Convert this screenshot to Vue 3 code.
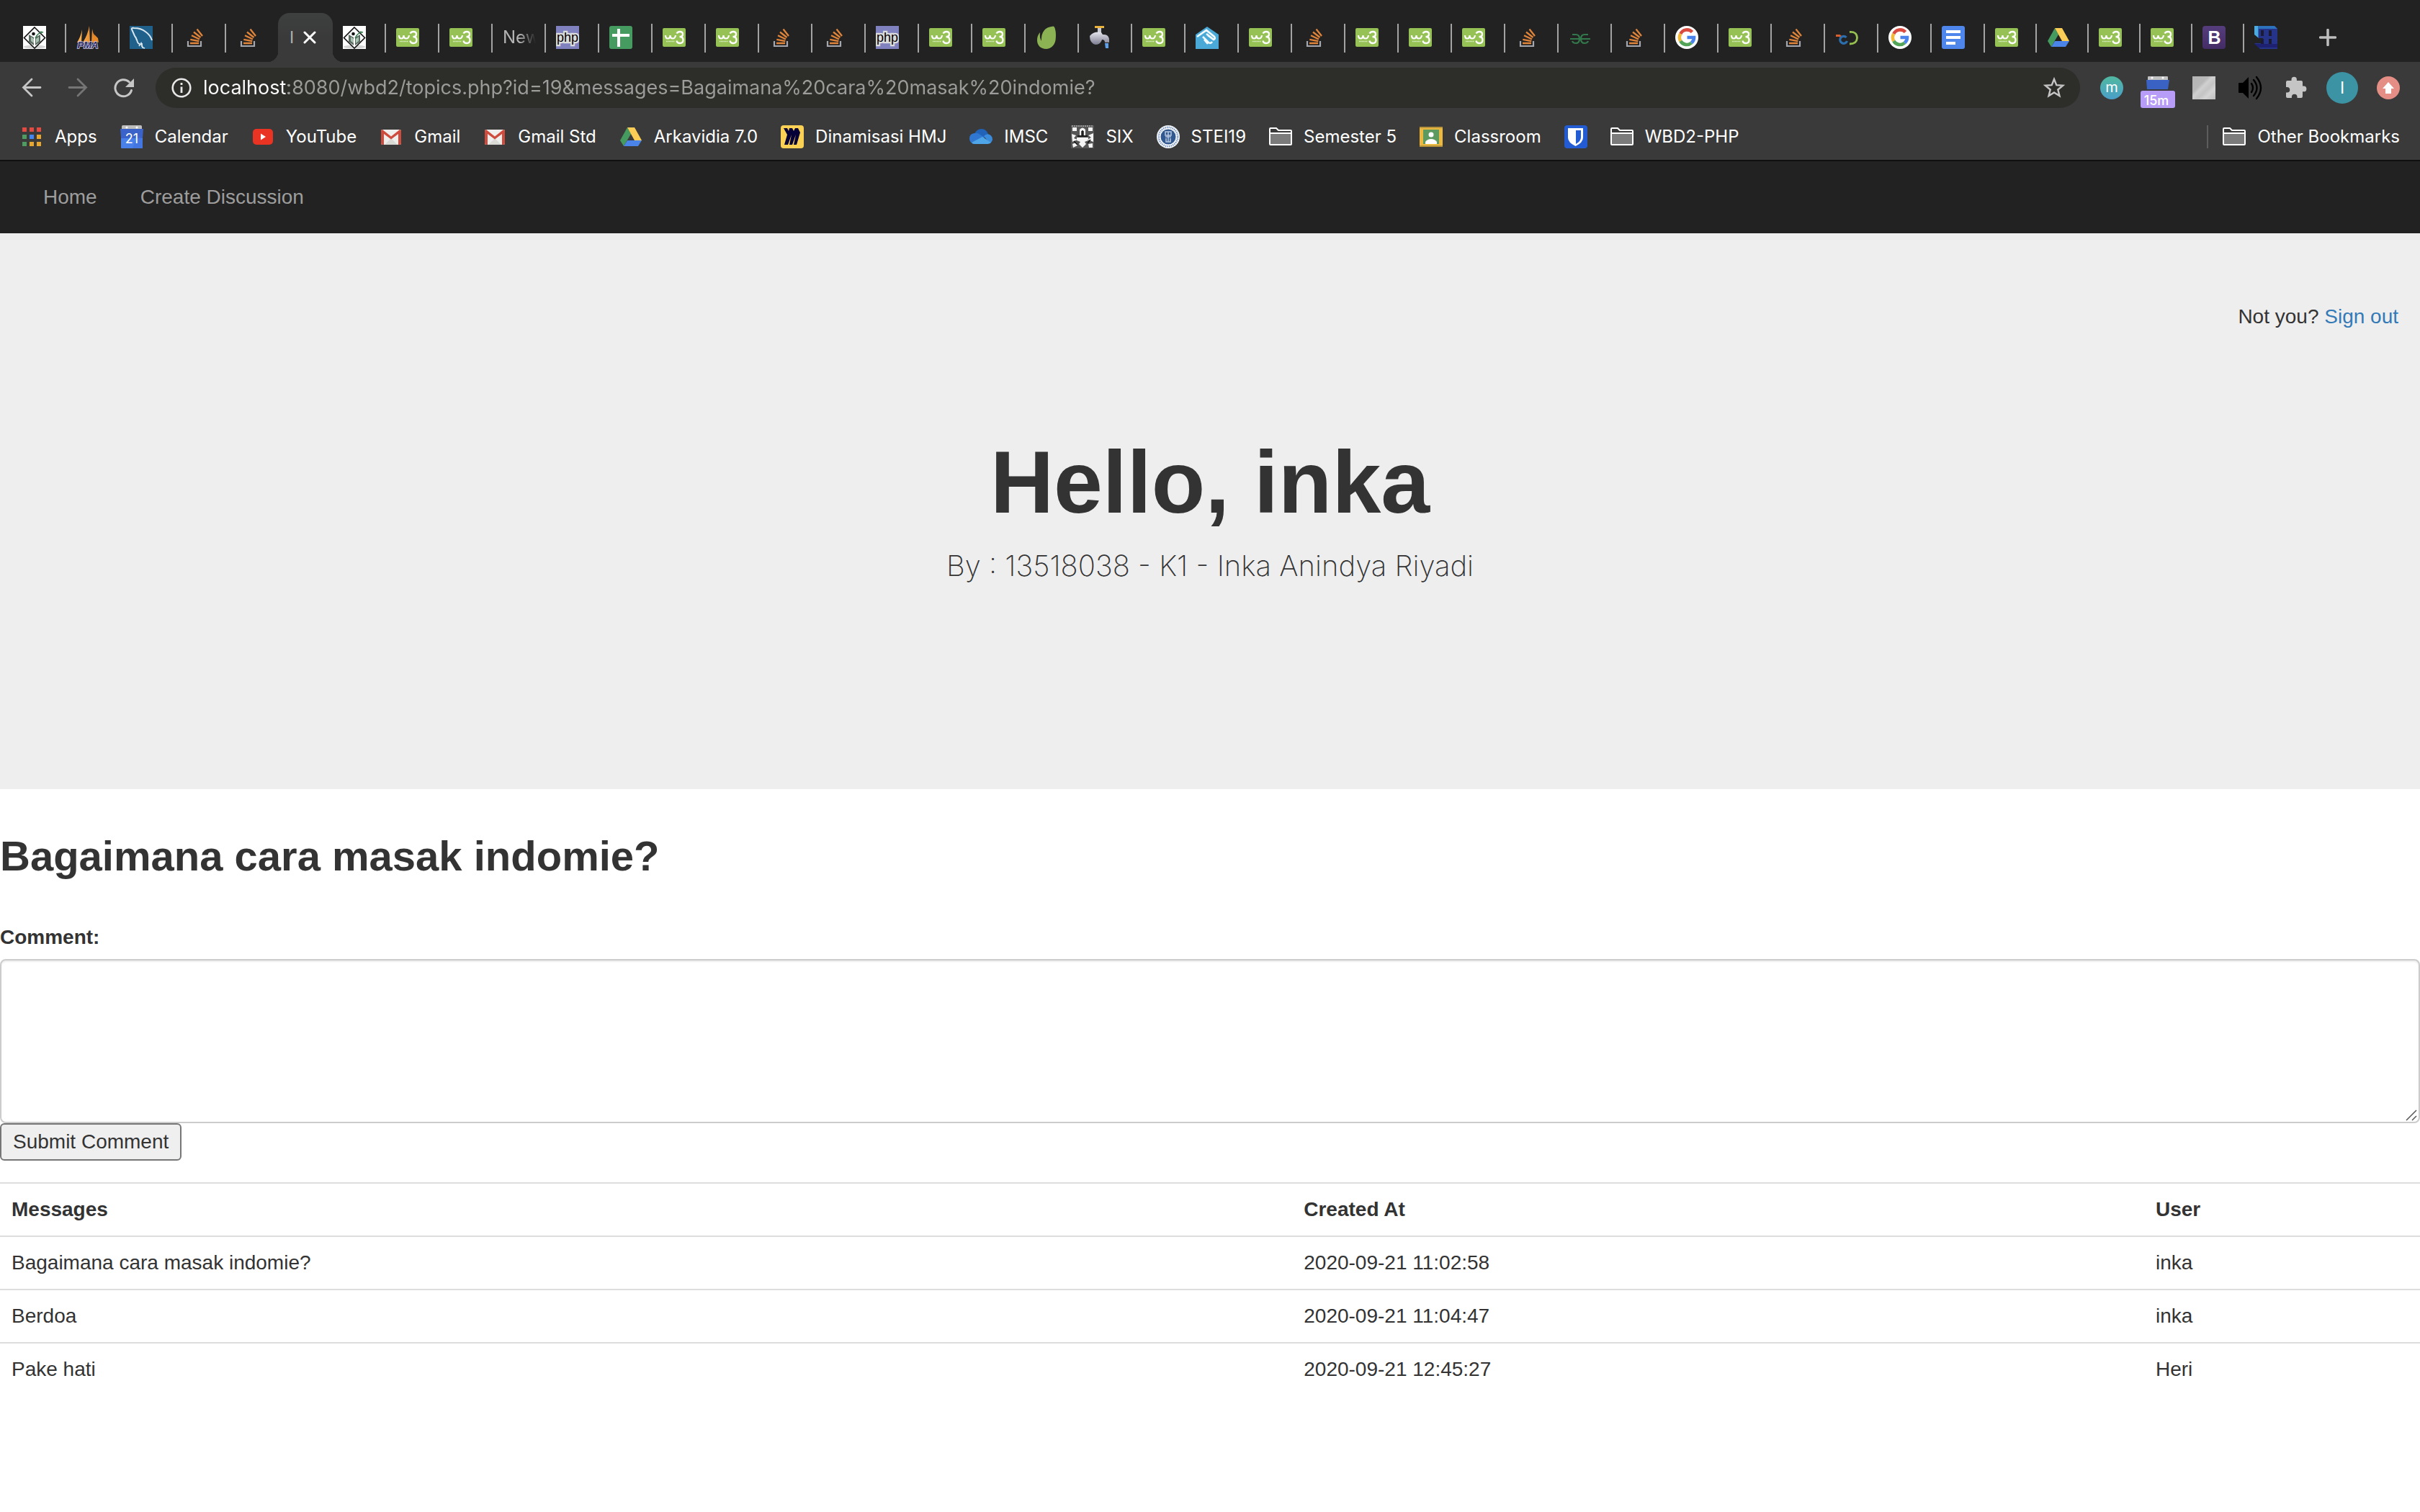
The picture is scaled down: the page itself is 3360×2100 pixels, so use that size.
<script setup>
import { ref } from 'vue'

const favicons = [
  'diamond', 'pma', 'mysql', 'stack', 'stack', 'active', 'diamond', 'w3', 'w3', 'new', 'php', 'sheets',
  'w3', 'w3', 'stack', 'stack', 'php', 'w3', 'w3', 'leaf', 'tap', 'w3', 'house', 'w3', 'stack', 'w3', 'w3',
  'w3', 'stack', 'gfg', 'stack', 'google', 'w3', 'stack', 'rings', 'google', 'docs',
  'w3', 'drive', 'w3', 'w3', 'bootstrap', 'cube',
]
const activeIndex = favicons.indexOf('active')
const tabs = favicons.map((icon, i) => ({
  icon,
  narrow: i > 36,
  divider: i !== activeIndex && i !== activeIndex - 1 && i !== favicons.length - 1,
}))

const bookmarks = [
  { icon: 'apps', label: 'Apps' },
  { icon: 'calendar', label: 'Calendar' },
  { icon: 'youtube', label: 'YouTube' },
  { icon: 'gmail', label: 'Gmail' },
  { icon: 'gmail', label: 'Gmail Std' },
  { icon: 'drive', label: 'Arkavidia 7.0' },
  { icon: 'miro', label: 'Dinamisasi HMJ' },
  { icon: 'cloud', label: 'IMSC' },
  { icon: 'six', label: 'SIX' },
  { icon: 'seal', label: 'STEI19' },
  { icon: 'folder', label: 'Semester 5' },
  { icon: 'classroom', label: 'Classroom' },
  { icon: 'shield', label: '' },
  { icon: 'folder', label: 'WBD2-PHP' },
]

const extensions = ['mext', 'calext', 'gray', 'speaker', 'puzzle', 'avatar', 'update']

const url = ref('localhost:8080/wbd2/topics.php?id=19&messages=Bagaimana%20cara%20masak%20indomie?')
const comment = ref('')

const messages = [
  { text: 'Bagaimana cara masak indomie?', created: '2020-09-21 11:02:58', user: 'inka' },
  { text: 'Berdoa', created: '2020-09-21 11:04:47', user: 'inka' },
  { text: 'Pake hati', created: '2020-09-21 12:45:27', user: 'Heri' },
]
</script>

<template>
  <svg class="defs" aria-hidden="true">
    <defs>
      <linearGradient id="g-m" x1="0" y1="0" x2="0" y2="1"><stop offset="0" stop-color="#51b8a0" /><stop offset="1" stop-color="#4a9fc8" /></linearGradient>
      <linearGradient id="g-gray" x1="0" y1="0" x2="1" y2="1"><stop offset="0" stop-color="#b4b4b4" /><stop offset=".35" stop-color="#b8b8b8" /><stop offset=".45" stop-color="#d0d0d0" /><stop offset=".6" stop-color="#c4c4c4" /><stop offset=".75" stop-color="#d4d4d4" /><stop offset="1" stop-color="#bcbcbc" /></linearGradient>
      <linearGradient id="g-pma" x1="0" y1="0" x2="1" y2="0"><stop offset="0" stop-color="#f9b55a" /><stop offset="1" stop-color="#e57f1c" /></linearGradient>
      <linearGradient id="g-tap" x1="0" y1="0" x2="0" y2="1"><stop offset="0" stop-color="#e4e4ec" /><stop offset="1" stop-color="#7d7d92" /></linearGradient>
      <linearGradient id="g-boot" x1="0" y1="0" x2="0" y2="1"><stop offset="0" stop-color="#563d7c" /><stop offset="1" stop-color="#432c66" /></linearGradient>

      <symbol id="diamond" viewBox="0 0 32 32">
        <path fill="#fff" d="M0 0h32v32H0z" />
        <ellipse cx="16" cy="29" rx="15" ry="2.5" fill="#d4d4d4" />
        <path d="M16 2 30.500 16.500 16 31 1.500 16.500z" fill="#fff" stroke="#111" stroke-width="1.600" />
        <path d="M8 12l7 4v11l-7-5zM24 12l-7 4v11l7-5z" fill="#5c6b62" />
        <path d="M11 15l4 3v6l-4-3zM18 18l4-3v6l-4 3z" fill="#a9c4b1" />
        <circle cx="14.500" cy="11" r="2.300" fill="#111" />
        <path d="M17 17q3-7 9-8M24 8l4 1" stroke="#357a4c" stroke-width="1.500" fill="none" />
      </symbol>
      <symbol id="pma" viewBox="0 0 32 32">
        <path d="M8 5 7 23H1Q6 15 8 5zM18 0l1 23H9Q16 12 18 0zM22 4q1 8 8 19h-9z" fill="url(#g-pma)" />
        <path d="M24 11l6 6 1 6-4-2z" fill="#e88a2a" />
        <text x="16" y="31" text-anchor="middle" font-family="Liberation Sans, sans-serif" font-size="13" font-weight="700" font-style="italic" fill="#2e2d66" stroke="#cfd0e6" stroke-width="1.600" paint-order="stroke">PMA</text>
      </symbol>
      <symbol id="mysql" viewBox="0 0 32 32">
        <path fill="#20618c" d="M0 0h32v32H0z" />
        <path d="M10 20Q9 16 7 14L3 5q-1-3 3-2 10 0 16 5 7 5 9 12" fill="none" stroke="#dbe8f0" stroke-width="2" />
        <path d="M10 19q1 6 4 6M13 28l3-4 2 6 3 1M17 24v5" fill="none" stroke="#dbe8f0" stroke-width="1.800" />
      </symbol>
      <symbol id="stack" viewBox="0 0 32 32">
        <path d="M7 21v7h18v-7" fill="none" stroke="#a4a7ad" stroke-width="2.200" />
        <path d="M10 24h12M10.300 18.800l12 2.400M12 13.300l11 5.200M15 8.500l9.500 7.500M19.500 4.500l7.500 9.500" fill="none" stroke="#e0843a" stroke-width="2.300" />
      </symbol>
      <symbol id="w3" viewBox="0 0 32 32">
        <rect y="3" width="32" height="26" rx="2" fill="#96c255" />
        <path d="M4 13q0 4.500 3.200 4.500T10.500 13q0 4.500 3.500 4.500T18 13" fill="none" stroke="#fff" stroke-width="2.200" />
        <path d="M19.500 10.500Q21 8 24 8q4 0 4 3.500T23.500 15q5 0 5 4.500 0 4.500-4.500 4.500-4 0-4.500-3.500" fill="none" stroke="#fff" stroke-width="2.300" />
        <path d="M5 21.500h12" stroke="#e3f0cf" stroke-width="1.600" stroke-dasharray="1.300 .7" />
      </symbol>
      <symbol id="php" viewBox="0 0 32 32">
        <path fill="#7f82be" d="M0 0h32v32H0z" />
        <text x="16" y="22" text-anchor="middle" font-family="Liberation Sans, sans-serif" font-size="18" fill="#000" stroke="#dcdcdc" stroke-width="4.500" paint-order="stroke">php</text>
      </symbol>
      <symbol id="sheets" viewBox="0 0 32 32">
        <rect width="32" height="32" rx="3" fill="#469b60" />
        <path d="M4 13h24M13 4v25" stroke="#fff" stroke-width="4" />
      </symbol>
      <symbol id="leaf" viewBox="0 0 32 32">
        <path d="M24.500.5C27 1 29 10 27.500 20 26 28 20 32 14.500 32 7 32 2 27 2 20q0-7 4-11-1 7 2 12Q7 2 24.500.5z" fill="#8cb353" />
      </symbol>
      <symbol id="tap" viewBox="0 0 32 32">
        <path d="M8 0h13v3H8z" fill="#e8b23c" />
        <path d="M12 3h5v6h-5z" fill="#c9c9d4" />
        <path d="M1 14q6-7 16-5l2 3q9-1 9 8v3h-6q0-4-4-4-2 7-9 7-8-2-8-12z" fill="url(#g-tap)" />
        <path d="M22 24h5v7h-4z" fill="#5fa0ea" />
      </symbol>
      <symbol id="house" viewBox="0 0 32 32">
        <path d="M0 12 16 1l16 11v20H0z" fill="#4ba9d8" />
        <path d="M2 15 15 6l11 9q2 3-1 4l-8-6M10 15l8 8q3 2 5-1M15 11l9 7M12 19l5 6" fill="none" stroke="#f2fafd" stroke-width="2.600" />
      </symbol>
      <symbol id="gfg" viewBox="0 0 32 32">
        <path d="M5 12h5q5 0 5 6 0 6-5 6-4 0-5-3M27 12h-5q-5 0-5 6 0 6 5 6 4 0 5-3M2 18h28" fill="none" stroke="#33784a" stroke-width="2.200" />
      </symbol>
      <symbol id="google" viewBox="0 0 32 32">
        <circle cx="16" cy="16" r="16" fill="#fff" />
        <path d="M23.500 8.500A10 10 0 0 0 7.300 11" fill="none" stroke="#db4a3f" stroke-width="4.600" />
        <path d="M7.300 11a10 10 0 0 0 0 10" fill="none" stroke="#f3b93b" stroke-width="4.600" />
        <path d="M7.300 21A10 10 0 0 0 22.500 23.600" fill="none" stroke="#53a458" stroke-width="4.600" />
        <path d="M22.500 23.600A10 10 0 0 0 26 16H16.500" fill="none" stroke="#4a83ec" stroke-width="4.600" />
      </symbol>
      <symbol id="rings" viewBox="0 0 32 32">
        <path d="M1 13.500h5l2 1.500" fill="none" stroke="#d9602c" stroke-width="3" />
        <path d="M15.500 16a5 5 0 1 0 1 5" fill="none" stroke="#2c6fae" stroke-width="3.200" />
        <path d="M20 8.500q10-1 10.500 8Q30 25 20 25" fill="none" stroke="#96c050" stroke-width="2.800" />
      </symbol>
      <symbol id="docs" viewBox="0 0 32 32">
        <rect width="32" height="32" rx="3" fill="#4f86ec" />
        <path d="M6 8h20M6 16h20M6 24h13" stroke="#fff" stroke-width="4" />
      </symbol>
      <symbol id="drive" viewBox="0 0 32 32">
        <path d="M11 3 1 21l5 8 10-17z" fill="#459a60" />
        <path d="M11 3h10l10 18H21z" fill="#f9cd56" />
        <path d="M11 21h20l-5 8H6z" fill="#4b84e8" />
      </symbol>
      <symbol id="bootstrap" viewBox="0 0 32 32">
        <rect width="32" height="32" rx="4" fill="url(#g-boot)" />
        <text x="16.500" y="25" text-anchor="middle" font-family="Liberation Sans, sans-serif" font-size="25" font-weight="700" fill="#fff">B</text>
      </symbol>
      <symbol id="cube" viewBox="0 0 32 32">
        <path d="M0 0h28l4 4v28H8l-8-8h12V17H6L0 9z" fill="#253389" />
        <path d="M0 0h28l4 4H6v13L0 11z" fill="#2c72bd" />
        <path d="M0 0h5v16l-5-4z" fill="#4cabe0" />
        <path d="M9 6h4v8H9zM20 6h4v8h-4zM9 18h4v7H9zM20 18h4v7h-4z" fill="#1b1c33" />
        <path d="M0 25h32v5H6z" fill="#1e2070" />
      </symbol>

      <symbol id="apps" viewBox="0 0 32 32">
        <path d="M3 3h6v6H3zM13 3h6v6h-6zM23 3h6v6h-6z" fill="#e5493f" />
        <path d="M3 13h6v6H3zM3 23h6v6H3z" fill="#4c9d5f" />
        <path d="M13 13h6v6h-6z" fill="#4285f4" />
        <path d="M23 13h6v6h-6zM13 23h6v6h-6zM23 23h6v6h-6z" fill="#e8a62f" />
      </symbol>
      <symbol id="calendar" viewBox="0 0 32 32">
        <rect x="2" width="28" height="8" rx="1.500" fill="#bdbdbd" />
        <circle cx="9" cy="3" r="1.500" fill="#fff" /><circle cx="23" cy="3" r="1.500" fill="#fff" />
        <path d="M0 5h32l-1 13H1z" fill="#3a62c8" />
        <path d="M1 18h30v13q0 1-1 1H2q-1 0-1-1z" fill="#4a80ea" />
        <path d="M24 13l7 7v11q0 1-1 1H17z" fill="#3f70d8" opacity=".6" />
        <text x="16" y="25" text-anchor="middle" font-family="Inter, sans-serif" font-size="18" fill="#fff">21</text>
      </symbol>
      <symbol id="youtube" viewBox="0 0 32 32">
        <rect x="2" y="5" width="28" height="22" rx="5" fill="#e93323" />
        <path d="M13 11.500v9l7-4.500z" fill="#fff" />
      </symbol>
      <symbol id="gmail" viewBox="0 0 32 32">
        <rect x="2" y="6" width="28" height="21" rx="2" fill="#eeeeec" />
        <path d="M16 18l9 9H7z" fill="#d9d9d6" />
        <path d="M2 8q0-2 2-2l12 9.500L28 6q2 0 2 2v17q0 2-2 2h-2V12L16 19.500 6 12v15H4q-2 0-2-2z" fill="#cf4b3e" />
      </symbol>
      <symbol id="miro" viewBox="0 0 32 32">
        <rect width="32" height="32" rx="4" fill="#fad155" />
        <path d="M4 4h5l2 4 1-4h4l2 4 2-4h4l3 6-5 17h-4l3-14-5 14h-4l3-14-5 14H5l4-14z" fill="#050038" />
      </symbol>
      <symbol id="cloud" viewBox="0 0 32 32">
        <path d="M7 12q3-7 10-7 6 0 9 7l-6 6z" fill="#2163b8" />
        <path d="M7 11q4-1 8 2l6 4-15 9Q0 24 0 18q0-6 7-7z" fill="#2f77d0" />
        <path d="M20 15q4-4 8-2 4 2 4 7-1 4-4 5z" fill="#3a8bdc" />
        <path d="M3 24l15-8 12 8q-2 2-5 2H7q-3 0-4-2z" fill="#4ea5e8" />
      </symbol>
      <symbol id="six" viewBox="0 0 32 32">
        <path d="M0 0h32v32H0z" fill="#555" />
        <path d="M2 3h6v5H2zM12 6q4-5 8 0v8h-2V8h-4v6h-2zM24 3h6v5h-6zM1 12l6 2-3 4 5 2-7 3zM31 11l-7 3 4 3-5 3 8 3zM8 17h16v4l-5 2 2 3-5 5-5-5 2-3-5-2zM2 26l5-2 2 4-6 3zM30 25l-6 1 1 5h5z" fill="#f4f4f4" />
        <path d="M16 7v8M9 15h14M4 22l5 5M27 20l-4 5" stroke="#111" stroke-width="1.500" />
        <path d="M1 1h30" stroke="#999" stroke-width="2" stroke-dasharray="2 1" />
      </symbol>
      <symbol id="seal" viewBox="0 0 32 32">
        <circle cx="16" cy="16" r="16" fill="#f4f7fb" />
        <circle cx="16" cy="16" r="13.200" fill="none" stroke="#6f8cba" stroke-width="2.400" stroke-dasharray="1.300 1.300" />
        <circle cx="16" cy="16" r="10.500" fill="#31588f" />
        <path d="M12 9h8v5h-8zM12 16h8M13 18v5h6v-5M16 9v14" fill="none" stroke="#b5c6df" stroke-width="1.500" />
      </symbol>
      <symbol id="folder" viewBox="0 0 32 32">
        <path d="M1 10h30v17H1z" fill="#7b7b7b" />
        <path d="M1 26V5q0-1 1-1h8l3 3h17q1 0 1 1v18q0 1-1 1H2q-1 0-1-1zM1 11h30" fill="none" stroke="#fff" stroke-width="2" />
      </symbol>
      <symbol id="classroom" viewBox="0 0 32 32">
        <path d="M0 2h32v28H0z" fill="#ebb93f" />
        <path d="M0 2h32v2H0zM0 28h32v2H0z" fill="#b8943c" />
        <path d="M5 6h22v20H5z" fill="#5c9a5f" />
        <circle cx="16" cy="13" r="3.500" fill="#fff" />
        <path d="M8 26v-3q3-4 8-4t8 4v3z" fill="#fff" />
      </symbol>
      <symbol id="shield" viewBox="0 0 32 32">
        <rect width="32" height="32" rx="4" fill="#235cd2" />
        <path d="M5 4h21v13q0 7-10.500 12Q5 24 5 17z" fill="#fff" />
        <path d="M16 7h7v10q0 5-7 9z" fill="#235cd2" />
      </symbol>

      <symbol id="mext" viewBox="0 0 48 48">
        <circle cx="24" cy="24" r="16" fill="url(#g-m)" />
        <text x="24" y="30" text-anchor="middle" font-family="Inter, sans-serif" font-size="20" fill="#fff">m</text>
      </symbol>
      <symbol id="calext" viewBox="0 0 48 56">
        <rect x="10" y="12" width="28" height="8" rx="1" fill="#c2c2c2" />
        <circle cx="16" cy="14" r="1.500" fill="#fff" /><circle cx="31" cy="14" r="1.500" fill="#fff" />
        <path d="M8 17h32l-2 13H9z" fill="#3a62c4" />
        <rect y="32" width="48" height="24" rx="3" fill="#b79df8" />
        <text x="22" y="52" text-anchor="middle" font-family="Inter, sans-serif" font-size="18" font-weight="500" fill="#fff">15m</text>
      </symbol>
      <symbol id="gray" viewBox="0 0 48 48"><path d="M8 8h32v32H8z" fill="url(#g-gray)" /></symbol>
      <symbol id="speaker" viewBox="0 0 48 48">
        <path d="M9 17h5l8-8v30l-8-8H9q-1 0-1-1V18q0-1 1-1z" fill="#000" />
        <path d="M26 18q4 6 0 12M29 13q9 11 0 22M33 9q12 15 0 30" fill="none" stroke="#000" stroke-width="2.400" stroke-linecap="round" />
      </symbol>
      <symbol id="puzzle" viewBox="0 0 48 48">
        <path d="M12 14h5.500v-1.500a3.700 3.700 0 0 1 7.400 0V14H31q2 0 2 2v5.500h1.500a3.900 3.900 0 0 1 0 7.800H33V36q0 2-2 2h-5.500v-1.500a3.700 3.700 0 0 0-7.600 0V38H12q-2 0-2-2v-5.500h1.500a3.800 3.800 0 0 0 0-7.600H10V16q0-2 2-2z" fill="#c5c5c5" />
      </symbol>
      <symbol id="avatar" viewBox="0 0 48 48">
        <circle cx="24" cy="24" r="22" fill="#3b93a4" />
        <text x="24" y="32" text-anchor="middle" font-family="Inter, sans-serif" font-size="23" fill="#fff">I</text>
      </symbol>
      <symbol id="update" viewBox="0 0 48 48">
        <circle cx="24" cy="24" r="16" fill="#e58e85" />
        <path d="M24 16l8 9h-4v7h-8v-7h-4z" fill="#fff" />
      </symbol>
    </defs>
  </svg>

  <header class="browser">
    <nav class="tabs" aria-label="Tabs">
      <div
        v-for="(tab, i) in tabs"
        :key="i"
        class="tab"
        :class="{ narrow: tab.narrow, divider: tab.divider, active: tab.icon === 'active' }"
      >
        <template v-if="tab.icon === 'active'">
          <span class="active-title">I</span>
          <button class="plain close" aria-label="Close tab">
            <svg width="18" height="18" viewBox="0 0 18 18"><path d="M2 2l14 14M16 2 2 16" stroke="#fff" stroke-width="3" stroke-linecap="round" /></svg>
          </button>
        </template>
        <span v-else-if="tab.icon === 'new'" class="new-title">New</span>
        <svg v-else class="icon"><use :href="'#' + tab.icon" /></svg>
      </div>
      <button class="plain add" aria-label="New tab">
        <svg width="24" height="24" viewBox="0 0 24 24"><path d="M12 1.500v21M1.500 12h21" stroke="#bebebe" stroke-width="3.500" stroke-linecap="round" /></svg>
      </button>
    </nav>

    <div class="toolbar">
      <button class="plain tool" aria-label="Back">
        <svg width="32" height="32" viewBox="0 0 32 32"><path d="M28 15.500H4.500M16 4 4.500 15.500 16 27" fill="none" stroke="#c6c6c6" stroke-width="2.800" stroke-linecap="round" /></svg>
      </button>
      <button class="plain tool" aria-label="Forward">
        <svg width="32" height="32" viewBox="0 0 32 32"><path d="M4 15.500h23.500M16 4l11.500 11.500L16 27" fill="none" stroke="#757575" stroke-width="2.800" stroke-linecap="round" /></svg>
      </button>
      <button class="plain tool" aria-label="Reload">
        <svg width="32" height="32" viewBox="0 0 32 32"><path d="M26.500 19.500A11.500 11.500 0 1 1 23.500 8" fill="none" stroke="#c6c6c6" stroke-width="3" stroke-linecap="round" /><path d="M30 3v12H18z" fill="#c6c6c6" /></svg>
      </button>
      <div class="omnibox">
        <svg width="28" height="28" viewBox="0 0 28 28"><circle cx="14" cy="14" r="12.300" fill="none" stroke="#e8e8e8" stroke-width="2.600" /><path d="M14 12.500V21M14 7v3" stroke="#e8e8e8" stroke-width="2.800" /></svg>
        <input v-model="url" class="url" type="text" aria-label="Address" spellcheck="false" />
        <button class="plain" aria-label="Bookmark this page">
          <svg width="32" height="32" viewBox="0 0 32 32"><path d="M16 4l3.300 8.200 8.900.6-6.900 5.700 2.200 8.700L16 22.400l-7.500 4.800 2.200-8.700-6.900-5.700 8.900-.6z" fill="none" stroke="#c6c6c6" stroke-width="2.400" /></svg>
        </button>
      </div>
      <div class="extensions">
        <button v-for="name in extensions" :key="name" class="plain tool" :aria-label="name">
          <svg width="48" height="48" :class="{ badge: name === 'calext' }"><use :href="'#' + name" /></svg>
        </button>
      </div>
    </div>

    <nav class="bookmarks" aria-label="Bookmarks">
      <a v-for="(b, i) in bookmarks" :key="i" href="#" class="bookmark">
        <svg class="icon"><use :href="'#' + b.icon" /></svg>
        <span v-if="b.label">{{ b.label }}</span>
      </a>
      <a href="#" class="bookmark other">
        <svg class="icon"><use href="#folder" /></svg>
        <span>Other Bookmarks</span>
      </a>
    </nav>
  </header>

  <main class="page">
    <nav class="navbar">
      <a href="#">Home</a>
      <a href="#">Create Discussion</a>
    </nav>

    <section class="jumbotron">
      <p class="signout">Not you? <a href="#">Sign out</a></p>
      <h1>Hello, inka</h1>
      <p class="byline">By : 13518038 - K1 - Inka Anindya Riyadi</p>
    </section>

    <h2>Bagaimana cara masak indomie?</h2>

    <form @submit.prevent>
      <label for="comment">Comment:</label>
      <div class="field">
        <textarea id="comment" v-model="comment"></textarea>
        <svg class="grip" width="16" height="16" viewBox="0 0 16 16"><path d="M1 15 15 1M9 15l6-6" stroke="#555" stroke-width="1.500" /></svg>
      </div>
      <button class="submit" type="submit">Submit Comment</button>
    </form>

    <table>
      <colgroup><col class="c-message" /><col class="c-created" /><col /></colgroup>
      <thead>
        <tr><th>Messages</th><th>Created At</th><th>User</th></tr>
      </thead>
      <tbody>
        <tr v-for="m in messages" :key="m.created">
          <td>{{ m.text }}</td>
          <td>{{ m.created }}</td>
          <td>{{ m.user }}</td>
        </tr>
      </tbody>
    </table>
  </main>
</template>

<style>
body {
  margin: 0;
  background: #fff;
}
</style>

<style scoped>
* {
  box-sizing: border-box;
}
.defs {
  position: absolute;
  width: 0;
  height: 0;
}
svg {
  display: block;
  flex: none;
}
.icon {
  width: 32px;
  height: 32px;
}
.plain {
  display: flex;
  align-items: center;
  justify-content: center;
  padding: 0;
  border: 0;
  background: none;
}

.browser {
  font-family: Inter, "Liberation Sans", sans-serif;
  background: #3a3a3a;
  border-bottom: 2px solid #101010;
}
.tabs {
  display: flex;
  height: 86px;
  padding: 18px 0 0 18px;
  background: #222;
}
.tab {
  position: relative;
  display: flex;
  align-items: center;
  flex: none;
  width: 74px;
  padding-left: 14px;
}
.tab.narrow {
  width: 72px;
}
.tab.divider::after {
  content: "";
  position: absolute;
  right: 0;
  top: 15px;
  width: 2px;
  height: 40px;
  background: #a3a3a3;
}
.tab.active {
  width: 76px;
  margin-left: -2px;
  padding-left: 16px;
  background: linear-gradient(#3d403f, #3a3a3a 50%);
  border-radius: 16px 16px 0 0;
}
.tab.active::before,
.tab.active::after {
  content: "";
  position: absolute;
  bottom: 0;
  width: 14px;
  height: 14px;
}
.tab.active::before {
  right: 100%;
  background: radial-gradient(circle at 0 0, transparent 14px, #3a3a3a 14px);
}
.tab.active::after {
  left: 100%;
  background: radial-gradient(circle at 100% 0, transparent 14px, #3a3a3a 14px);
}
.active-title {
  width: 8px;
  overflow: hidden;
  font-size: 23px;
  line-height: 32px;
  color: #aeb0af;
}
.close {
  margin-left: 11px;
}
.new-title {
  width: 46px;
  overflow: hidden;
  font-size: 24px;
  line-height: 32px;
  color: #b4b4b4;
  mask-image: linear-gradient(90deg, #000 50%, transparent);
}
.add {
  width: 68px;
  margin-left: 10px;
}

.toolbar {
  display: flex;
  align-items: center;
  height: 72px;
  padding: 0 12px;
}
.tool {
  flex: none;
  width: 64px;
  height: 56px;
}
.omnibox {
  display: flex;
  flex: 1;
  align-items: center;
  gap: 16px;
  height: 56px;
  margin: 0 12px;
  padding: 0 20px 0 22px;
  border-radius: 28px;
  background: #2d2d29;
}
.url {
  flex: 1;
  min-width: 0;
  height: 40px;
  padding: 0;
  border: 0;
  outline: 0;
  font: 27px/40px Inter, "Liberation Sans", sans-serif;
  color: transparent;
  background: linear-gradient(90deg, #fff 118px, #9c9c9a 118px);
  background-clip: text;
  -webkit-background-clip: text;
}
.extensions {
  display: flex;
}
.badge {
  height: 56px;
}

.bookmarks {
  display: flex;
  align-items: center;
  gap: 32px;
  height: 64px;
  padding: 0 28px;
}
.bookmark {
  display: flex;
  align-items: center;
  gap: 16px;
  font-size: 24px;
  line-height: 32px;
  color: #fff;
  text-decoration: none;
  white-space: nowrap;
}
.other {
  margin-left: auto;
  padding-left: 20px;
  border-left: 2px solid #5d5d5d;
}

.page {
  font: 28px/40px "Liberation Sans", Arial, sans-serif;
  color: #333;
}
.navbar {
  display: flex;
  padding: 0 30px;
  background: #222;
}
.navbar a {
  padding: 30px;
  color: #9d9d9d;
  text-decoration: none;
}
.jumbotron {
  padding: 96px 30px 280px;
  background: #eee;
  text-align: center;
}
.signout {
  margin: 0;
  text-align: right;
}
.signout a {
  color: #337ab7;
  text-decoration: none;
}
h1 {
  margin: 140px 0 16px;
  font-size: 122px;
  line-height: 140px;
}
.byline {
  margin: 0;
  font: 200 40px/60px Inter, "Liberation Sans", sans-serif;
}
h2 {
  margin: 60px 0;
  font-size: 58px;
  line-height: 66px;
}
label {
  display: block;
  margin-bottom: 10px;
  font-weight: 700;
}
.field {
  position: relative;
}
textarea {
  display: block;
  width: 100%;
  height: 228px;
  padding: 12px 24px;
  border: 2px solid #ccc;
  border-radius: 8px;
  box-shadow: inset 0 2px 2px rgba(0, 0, 0, 0.075);
  font: inherit;
  color: #555;
  resize: none;
}
.grip {
  position: absolute;
  right: 4px;
  bottom: 3px;
}
.submit {
  display: block;
  height: 52px;
  padding: 0 16px;
  border: 2px solid #767676;
  border-radius: 6px;
  background: #efefef;
  font: inherit;
  color: #333;
}
table {
  width: 100%;
  margin-top: 30px;
  border-collapse: separate;
  border-spacing: 0;
  table-layout: fixed;
}
.c-message {
  width: 53.4%;
}
.c-created {
  width: 35.2%;
}
th,
td {
  padding: 16px;
  border-top: 2px solid #ddd;
  text-align: left;
}
</style>
